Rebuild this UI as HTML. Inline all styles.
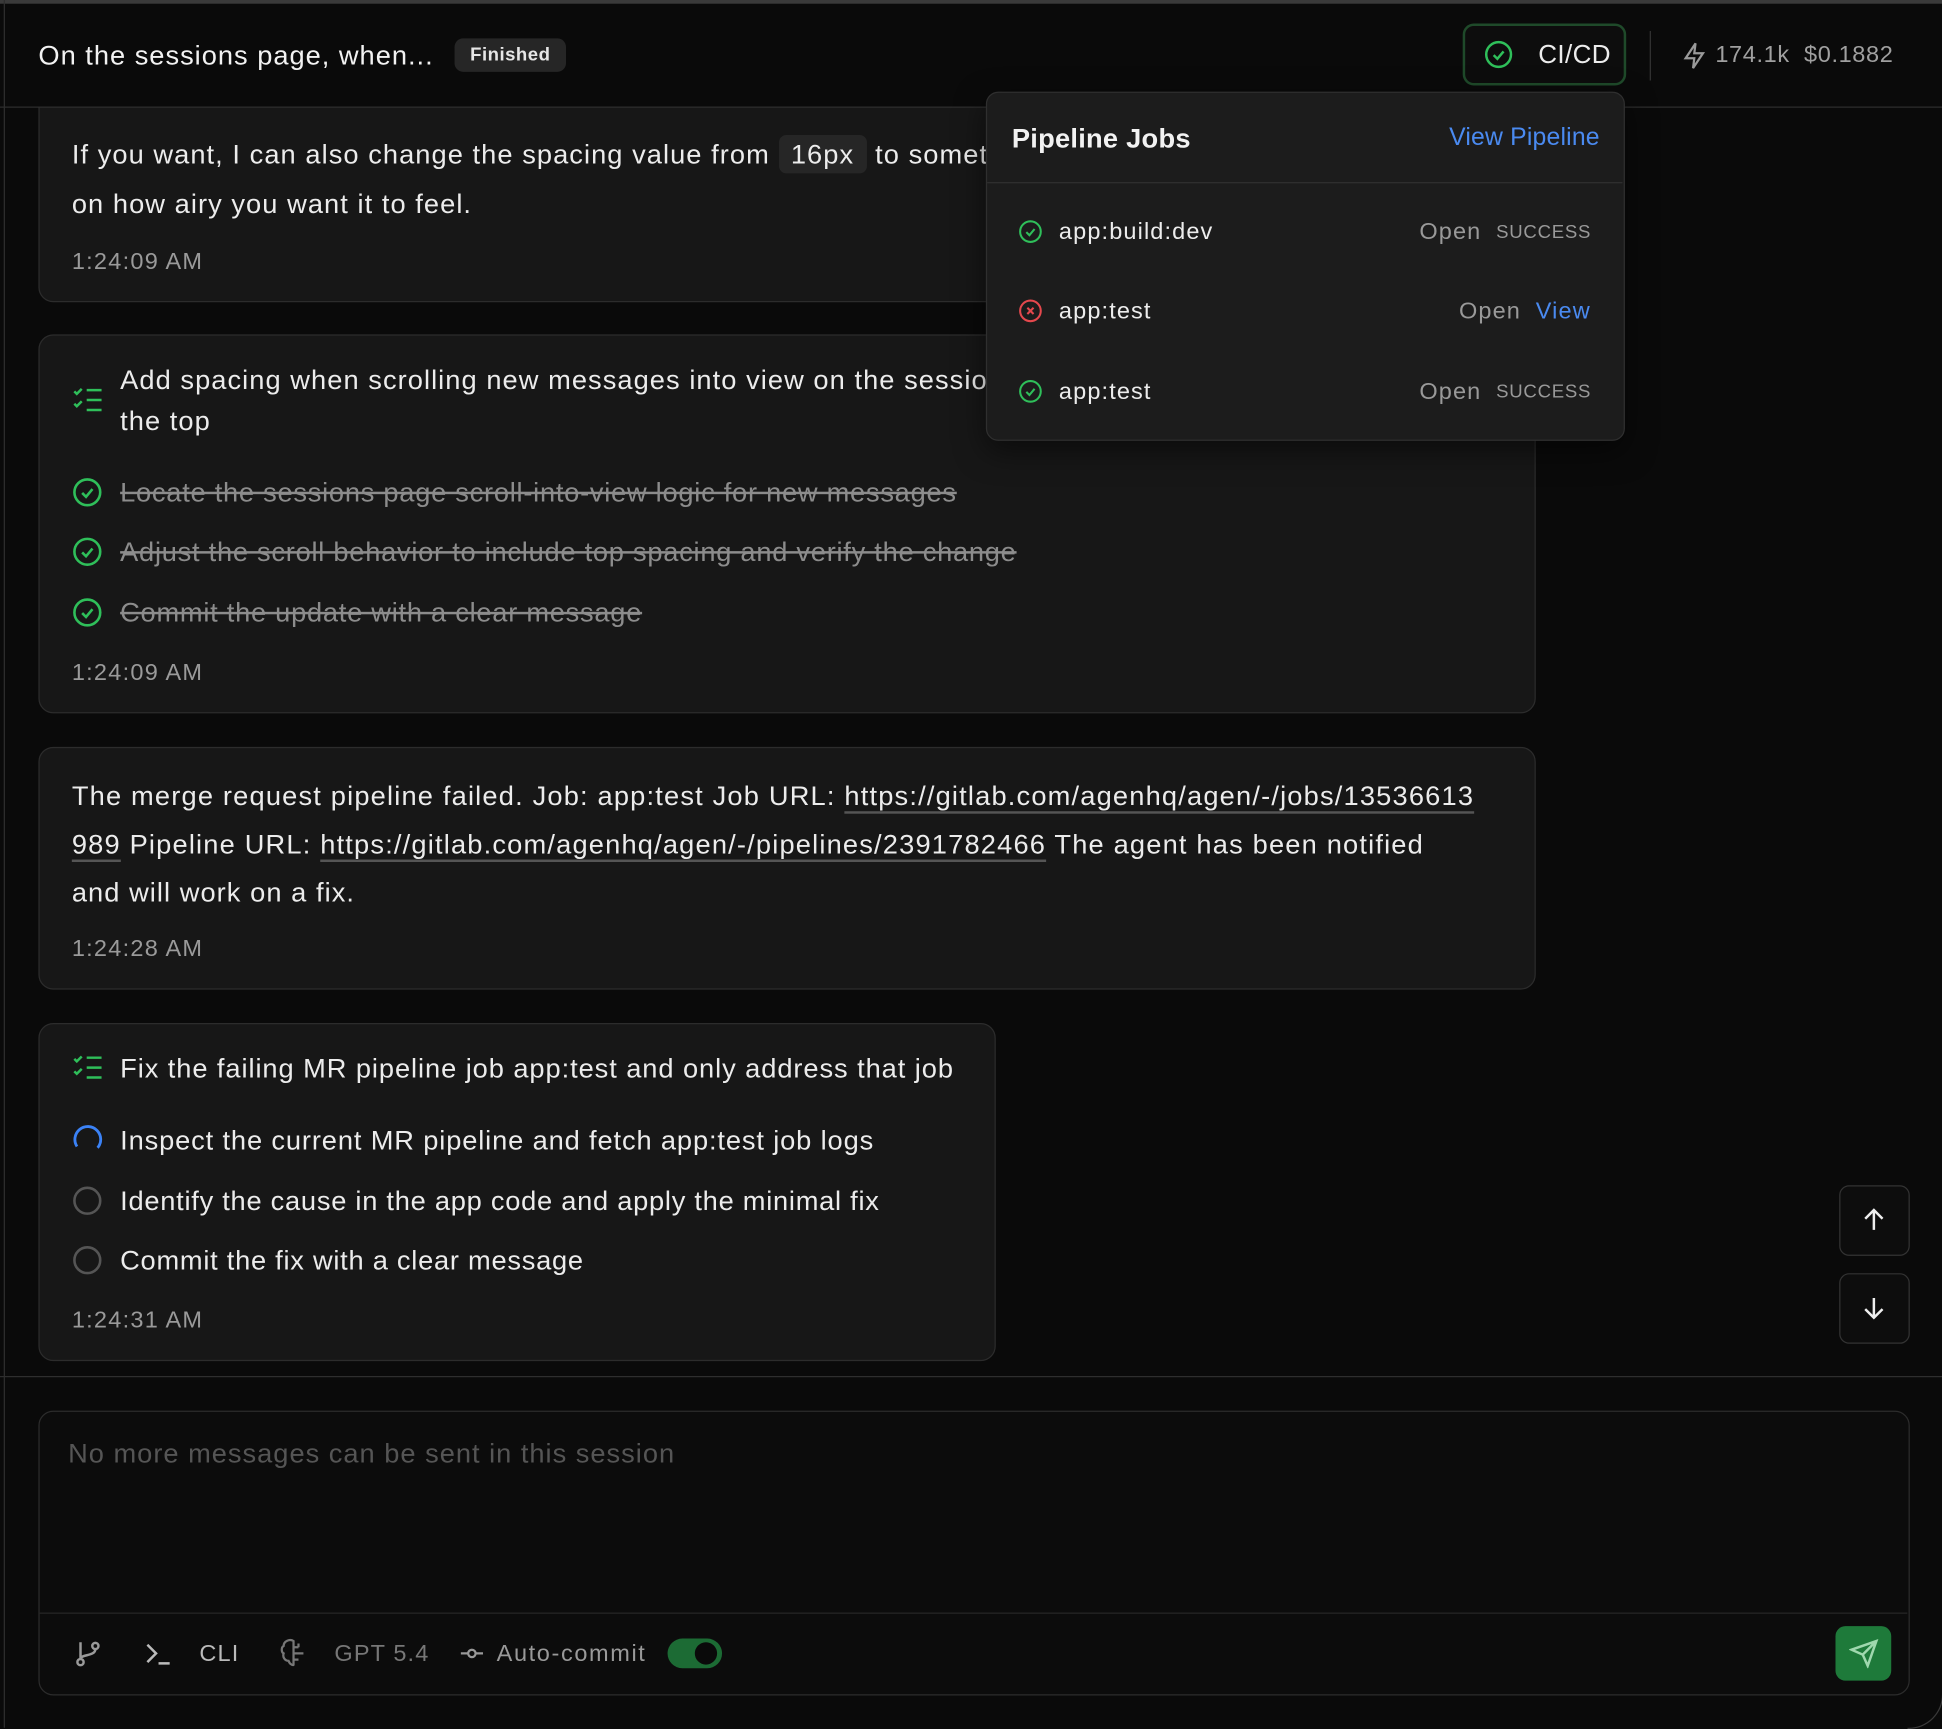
<!DOCTYPE html>
<html><head><meta charset="utf-8"><style>
html,body{margin:0;padding:0;background:#0a0a0a;width:1942px;height:1728px;overflow:hidden}
#w{position:absolute;left:0;top:0;width:1568px;height:1395px;transform:scale(1.23852);transform-origin:0 0;font-family:"Liberation Sans",sans-serif;color:#ececec;background:#0a0a0a}
.a{position:absolute}
.card{position:absolute;background:#171717;border:1px solid #2c2c2c;border-radius:12px}
.t{position:absolute;font-size:22px;letter-spacing:0.85px;white-space:nowrap;margin-top:1px}
.s{font-size:19px;letter-spacing:0.9px}
.ts{position:absolute;font-size:19px;letter-spacing:1px;color:#9a9a9a;margin-top:2px}
.st{color:#8c8c8c;text-decoration:line-through;letter-spacing:0.6px}
.lk{text-decoration:underline;text-decoration-color:#555;text-underline-offset:5px}
svg{position:absolute}
</style></head><body><div id="w">

<!-- card1 -->
<div class="card" style="left:31px;top:70px;width:1207px;height:172px;border-radius:0 0 12px 12px"></div>
<div class="t" style="left:58px;top:111px">If you want, I can also change the spacing value from <span style="background:#262626;border-radius:6px;padding:3px 10px">16px</span> to something else depending</div>
<div class="t" style="left:58px;top:151px">on how airy you want it to feel.</div>
<div class="ts" style="left:58px;top:199px">1:24:09 AM</div>

<!-- header -->
<div class="a" style="left:0;top:0;width:1568px;height:86px;background:#0a0a0a"></div>
<div class="a" style="left:0;top:0;width:1568px;height:3px;background:#3a3a3a"></div>
<div class="a" style="left:3px;top:0;width:1px;height:1395px;background:#2e2e2e"></div>
<div class="a" style="left:0;top:86px;width:1568px;height:1px;background:#2e2e2e"></div>
<div class="t" style="left:31px;top:31px;font-size:22px;letter-spacing:0.8px;color:#f2f2f2">On the sessions page, when...</div>
<div class="a" style="left:367px;top:31px;width:90px;height:27px;background:#262626;border-radius:7px;font-size:15px;font-weight:bold;color:#e6e6e6;text-align:center;line-height:27px;letter-spacing:0.4px">Finished</div>
<div class="a" style="left:1181px;top:19px;width:128px;height:46px;border:2px solid #1f4a2a;border-radius:9px;background:#0d0d0d"></div>
<svg style="left:1198px;top:32px" width="24" height="24" viewBox="0 0 24 24" fill="none" stroke="#2fbf5a" stroke-width="2"><circle cx="12" cy="12" r="10"/><path d="M8 12.5l3 3 5-6"/></svg>
<div class="t" style="left:1242px;top:32px;font-size:21px;letter-spacing:0.3px">CI/CD</div>
<div class="a" style="left:1332px;top:25px;width:1px;height:40px;background:#333"></div>
<svg style="left:1358px;top:34px" width="20" height="22" viewBox="0 0 20 22" fill="none" stroke="#9a9a9a" stroke-width="1.8"><path d="M11 1L3 13h7l-1 8 8-12h-7z"/></svg>
<div class="t s" style="left:1385px;top:33px;color:#a0a0a0;letter-spacing:0.5px">174.1k&nbsp;&nbsp;$0.1882</div>

<!-- card2 -->
<div class="card" style="left:31px;top:270px;width:1207px;height:304px"></div>
<svg style="left:58px;top:311px" width="26" height="24" viewBox="0 0 26 24" fill="none" stroke="#2fbf5a" stroke-width="2"><path d="M2 5l2 2 4-4M2 15l2 2 4-4M12 4h12M12 12h12M12 20h12"/></svg>
<div class="t" style="left:97px;top:293px">Add spacing when scrolling new messages into view on the sessions page so the message sits lower from</div>
<div class="t" style="left:97px;top:326px">the top</div>
<svg style="left:58px;top:385px" width="25" height="25" viewBox="0 0 24 24" fill="none" stroke="#2fbf5a" stroke-width="2"><circle cx="12" cy="12" r="10"/><path d="M8 12.5l3 3 5-6"/></svg>
<div class="t st" style="left:97px;top:384px">Locate the sessions page scroll-into-view logic for new messages</div>
<svg style="left:58px;top:433px" width="25" height="25" viewBox="0 0 24 24" fill="none" stroke="#2fbf5a" stroke-width="2"><circle cx="12" cy="12" r="10"/><path d="M8 12.5l3 3 5-6"/></svg>
<div class="t st" style="left:97px;top:432px">Adjust the scroll behavior to include top spacing and verify the change</div>
<svg style="left:58px;top:482px" width="25" height="25" viewBox="0 0 24 24" fill="none" stroke="#2fbf5a" stroke-width="2"><circle cx="12" cy="12" r="10"/><path d="M8 12.5l3 3 5-6"/></svg>
<div class="t st" style="left:97px;top:481px">Commit the update with a clear message</div>
<div class="ts" style="left:58px;top:531px">1:24:09 AM</div>

<!-- card3 -->
<div class="card" style="left:31px;top:603px;width:1207px;height:194px"></div>
<div class="t" style="left:58px;top:629px;letter-spacing:0.95px">The merge request pipeline failed. Job: app:test Job URL: <span class="lk">https://gitlab.com/agenhq/agen/-/jobs/13536613</span></div>
<div class="t" style="left:58px;top:668px;letter-spacing:0.95px"><span class="lk">989</span> Pipeline URL: <span class="lk">https://gitlab.com/agenhq/agen/-/pipelines/2391782466</span> The agent has been notified</div>
<div class="t" style="left:58px;top:707px">and will work on a fix.</div>
<div class="ts" style="left:58px;top:754px">1:24:28 AM</div>

<!-- card4 -->
<div class="card" style="left:31px;top:826px;width:771px;height:271px"></div>
<svg style="left:58px;top:850px" width="26" height="24" viewBox="0 0 26 24" fill="none" stroke="#2fbf5a" stroke-width="2"><path d="M2 5l2 2 4-4M2 15l2 2 4-4M12 4h12M12 12h12M12 20h12"/></svg>
<div class="t" style="left:97px;top:849px;letter-spacing:0.75px">Fix the failing MR pipeline job app:test and only address that job</div>
<svg style="left:58px;top:908px" width="25" height="25" viewBox="0 0 24 24" fill="none" stroke="#3b82f6" stroke-width="2.2"><path d="M4 17A10 10 0 1 1 20 18"/></svg>
<div class="t" style="left:97px;top:907px;letter-spacing:0.7px">Inspect the current MR pipeline and fetch app:test job logs</div>
<svg style="left:58px;top:957px" width="25" height="25" viewBox="0 0 24 24" fill="none" stroke="#555" stroke-width="2"><circle cx="12" cy="12" r="10"/></svg>
<div class="t" style="left:97px;top:956px;letter-spacing:0.6px">Identify the cause in the app code and apply the minimal fix</div>
<svg style="left:58px;top:1005px" width="25" height="25" viewBox="0 0 24 24" fill="none" stroke="#555" stroke-width="2"><circle cx="12" cy="12" r="10"/></svg>
<div class="t" style="left:97px;top:1004px;letter-spacing:0.6px">Commit the fix with a clear message</div>
<div class="ts" style="left:58px;top:1054px">1:24:31 AM</div>

<!-- scroll buttons -->
<div class="a" style="left:1485px;top:957px;width:55px;height:55px;border:1px solid #333;border-radius:8px;background:#0d0d0d"></div>
<svg style="left:1501px;top:973px" width="24" height="24" viewBox="0 0 24 24" fill="none" stroke="#eee" stroke-width="2"><path d="M12 20V4M5 11l7-7 7 7"/></svg>
<div class="a" style="left:1485px;top:1028px;width:55px;height:55px;border:1px solid #333;border-radius:8px;background:#0d0d0d"></div>
<svg style="left:1501px;top:1044px" width="24" height="24" viewBox="0 0 24 24" fill="none" stroke="#eee" stroke-width="2"><path d="M12 4v16M5 13l7 7 7-7"/></svg>

<div class="a" style="left:0;top:1111px;width:1568px;height:1px;background:#2e2e2e"></div>

<!-- input -->
<div class="a" style="left:31px;top:1139px;width:1509px;height:228px;border:1px solid #2c2c2c;border-radius:12px;background:#0c0c0c"></div>
<div class="a" style="left:32px;top:1302px;width:1508px;height:1px;background:#262626"></div>
<div class="t" style="left:55px;top:1160px;color:#555;letter-spacing:0.8px">No more messages can be sent in this session</div>
<svg style="left:59px;top:1323px" width="24" height="24" viewBox="0 0 24 24" fill="none" stroke="#9a9a9a" stroke-width="2"><circle cx="6" cy="19" r="2.5"/><circle cx="18" cy="6" r="2.5"/><path d="M6 3v13.5M18 8.5c0 6-12 4-12 8"/></svg>
<svg style="left:116px;top:1324px" width="24" height="22" viewBox="0 0 24 22" fill="none" stroke="#bbb" stroke-width="2"><path d="M3 4l7 7-7 7M12 19h9"/></svg>
<div class="t s" style="left:161px;top:1324px;color:#bbb">CLI</div>
<svg style="left:225px;top:1322px" width="24" height="26" viewBox="0 0 24 26" fill="none" stroke="#777" stroke-width="1.8"><path d="M12 3c-3-2-8 0-8 4-2 1-2 5 0 6-1 3 1 6 4 6 1 3 4 4 4 3V3zM12 8h4M12 13h6M12 18h4M16 8v-3M18 13h2"/></svg>
<div class="t s" style="left:270px;top:1324px;color:#777">GPT 5.4</div>
<svg style="left:372px;top:1328px" width="18" height="14" viewBox="0 0 18 14" fill="none" stroke="#999" stroke-width="1.8"><circle cx="9" cy="7" r="3"/><path d="M0 7h6M12 7h6"/></svg>
<div class="t s" style="left:401px;top:1324px;color:#999;letter-spacing:1.3px">Auto-commit</div>
<div class="a" style="left:539px;top:1323px;width:44px;height:24px;background:#1c6b34;border-radius:12px"></div>
<div class="a" style="left:561px;top:1326px;width:18px;height:18px;background:#0a0a0a;border-radius:50%"></div>
<div class="a" style="left:1482px;top:1313px;width:45px;height:44px;background:#1e7a3a;border-radius:8px"></div>
<svg style="left:1493px;top:1323px" width="24" height="24" viewBox="0 0 24 24" fill="none" stroke="#9fd8ae" stroke-width="2"><path d="M22 2L11 13M22 2l-7 20-4-9-9-4z"/></svg>

<!-- popup -->
<div class="a" style="left:796px;top:74px;width:514px;height:280px;background:#1c1c1c;border:1px solid #2f2f2f;border-radius:10px;box-shadow:0 8px 24px rgba(0,0,0,.5)"></div>
<div class="t" style="left:817px;top:98px;font-weight:bold;color:#f2f2f2;letter-spacing:0.2px">Pipeline Jobs</div>
<div class="t" style="left:1170px;top:99px;font-size:20px;letter-spacing:0.15px;color:#4a8af0">View Pipeline</div>
<div class="a" style="left:797px;top:147px;width:513px;height:1px;background:#2f2f2f"></div>
<svg style="left:822px;top:177px" width="20" height="20" viewBox="0 0 24 24" fill="none" stroke="#2fbf5a" stroke-width="2"><circle cx="12" cy="12" r="10"/><path d="M8 12.5l3 3 5-6"/></svg>
<div class="t s" style="left:855px;top:176px">app:build:dev</div>
<div class="t s" style="left:1146px;top:176px;color:#999">Open</div>
<div class="t" style="left:1208px;top:178px;font-size:15px;color:#999;letter-spacing:0.6px">SUCCESS</div>
<svg style="left:822px;top:241px" width="20" height="20" viewBox="0 0 24 24" fill="none" stroke="#e5484d" stroke-width="2"><circle cx="12" cy="12" r="10"/><path d="M9 9l6 6M15 9l-6 6"/></svg>
<div class="t s" style="left:855px;top:240px">app:test</div>
<div class="t s" style="left:1178px;top:240px;color:#999">Open</div>
<div class="t s" style="left:1240px;top:240px;color:#4a8af0">View</div>
<svg style="left:822px;top:306px" width="20" height="20" viewBox="0 0 24 24" fill="none" stroke="#2fbf5a" stroke-width="2"><circle cx="12" cy="12" r="10"/><path d="M8 12.5l3 3 5-6"/></svg>
<div class="t s" style="left:855px;top:305px">app:test</div>
<div class="t s" style="left:1146px;top:305px;color:#999">Open</div>
<div class="t" style="left:1208px;top:307px;font-size:15px;color:#999;letter-spacing:0.6px">SUCCESS</div>

<div class="a" style="left:1540px;top:1360px;width:28px;height:35px;border-right:1px solid #3a3a3a;border-bottom:1px solid #3a3a3a;border-radius:0 0 28px 0"></div>
</div></body></html>
